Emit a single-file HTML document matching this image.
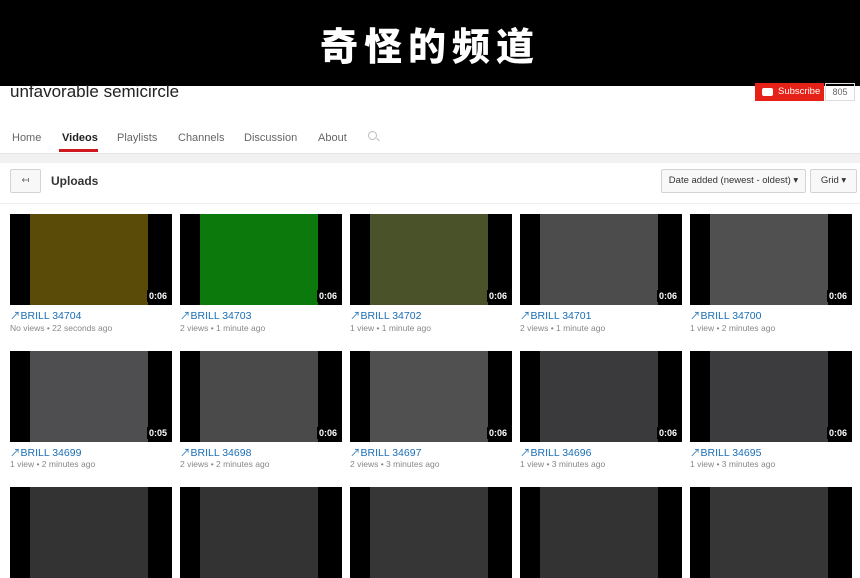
<!DOCTYPE html><html><head><meta charset="utf-8"><style>
body{margin:0;width:860px;height:567px;overflow:hidden;background:#fff;font-family:"Liberation Sans","Noto Sans CJK SC",sans-serif;position:relative}
.top{position:absolute;left:0;top:0;width:860px;height:86px;background:#000;color:#fff;font:900 38px "Noto Sans CJK SC",sans-serif;text-align:center;line-height:88px;letter-spacing:6px}
.a{position:absolute}
.name{left:10px;top:82px;font-size:17px;color:#222}
.sub{left:755px;top:83px;width:69px;height:18px;background:#e62117;color:#fff;font-size:9.5px;line-height:18px;overflow:hidden}
.sub i{position:absolute;left:7px;top:5px;width:11px;height:8px;background:#fff;border-radius:2px}
.sub span{position:absolute;left:23px}
.cnt{left:825px;top:83px;width:28px;height:16px;border:1px solid #ddd;font-size:9px;color:#666;line-height:16px;text-align:center}
.tab{top:132px;font-size:11px;color:#666}
.band{left:0;top:153px;width:860px;height:9px;background:#f1f1f1;border-top:1px solid #e4e4e4}
.btn{border:1px solid #d3d3d3;background:#f8f8f8;border-radius:2px;font-size:9.5px;color:#333;line-height:22px}
.thumb{position:absolute;width:162px;height:91px;background:#000;overflow:hidden}
.thumb b{position:absolute;left:20px;top:0;width:118px;height:91px}
.thumb em{position:absolute;right:3px;bottom:3px;background:#000;color:#fff;font:bold 9px "Liberation Sans";padding:1px 2px;font-style:normal}
.t{position:absolute;font-size:10.5px;color:#1a6eb5}
.m{position:absolute;font-size:8.5px;color:#888}
</style></head><body>
<div class="top">奇怪的频道</div>
<div class="a name">unfavorable semicircle</div>
<div class="a sub"><i></i><span>Subscribe</span></div>
<div class="a cnt">805</div>
<div class="a tab" style="left:12px">Home</div>
<div class="a tab" style="left:62px;color:#222;font-weight:bold">Videos</div>
<div class="a" style="left:59px;top:149px;width:39px;height:3px;background:#cc181e"></div>
<div class="a tab" style="left:117px">Playlists</div>
<div class="a tab" style="left:178px">Channels</div>
<div class="a tab" style="left:244px">Discussion</div>
<div class="a tab" style="left:318px">About</div>
<div class="a" style="left:368px;top:131px;width:7px;height:7px;border:1px solid #bbb;border-radius:50%"></div>
<div class="a" style="left:376px;top:139px;width:4px;height:1px;background:#bbb;transform:rotate(45deg)"></div>
<div class="a band"></div>
<div class="a btn" style="left:10px;top:169px;width:29px;height:22px;text-align:center;color:#666">↤</div>
<div class="a" style="left:51px;top:174px;font-size:12px;font-weight:bold;color:#333">Uploads</div>
<div class="a btn" style="left:661px;top:169px;width:143px;text-align:center">Date added (newest - oldest) ▾</div>
<div class="a btn" style="left:810px;top:169px;width:45px;text-align:center">Grid ▾</div>
<div class="a" style="left:0;top:203px;width:860px;height:1px;background:#eee"></div>

<div class="thumb" style="left:10px;top:214px"><b style="background:#5a4c08"></b><em>0:06</em></div>
<div class="thumb" style="left:180px;top:214px"><b style="background:#0b790c"></b><em>0:06</em></div>
<div class="thumb" style="left:350px;top:214px"><b style="background:#4a5229"></b><em>0:06</em></div>
<div class="thumb" style="left:520px;top:214px"><b style="background:#4c4c4c"></b><em>0:06</em></div>
<div class="thumb" style="left:690px;top:214px"><b style="background:#505050"></b><em>0:06</em></div>
<div class="thumb" style="left:10px;top:351px"><b style="background:#4e4e50"></b><em>0:05</em></div>
<div class="thumb" style="left:180px;top:351px"><b style="background:#4a4a4a"></b><em>0:06</em></div>
<div class="thumb" style="left:350px;top:351px"><b style="background:#505050"></b><em>0:06</em></div>
<div class="thumb" style="left:520px;top:351px"><b style="background:#3a3a3c"></b><em>0:06</em></div>
<div class="thumb" style="left:690px;top:351px"><b style="background:#3c3c3e"></b><em>0:06</em></div>
<div class="thumb" style="left:10px;top:487px"><b style="background:#333"></b></div>
<div class="thumb" style="left:180px;top:487px"><b style="background:#333"></b></div>
<div class="thumb" style="left:350px;top:487px"><b style="background:#363636"></b></div>
<div class="thumb" style="left:520px;top:487px"><b style="background:#333"></b></div>
<div class="thumb" style="left:690px;top:487px"><b style="background:#363636"></b></div>

<div class="t" style="left:10px;top:308px">↗BRILL 34704</div><div class="m" style="left:10px;top:323px">No views • 22 seconds ago</div>
<div class="t" style="left:180px;top:308px">↗BRILL 34703</div><div class="m" style="left:180px;top:323px">2 views • 1 minute ago</div>
<div class="t" style="left:350px;top:308px">↗BRILL 34702</div><div class="m" style="left:350px;top:323px">1 view • 1 minute ago</div>
<div class="t" style="left:520px;top:308px">↗BRILL 34701</div><div class="m" style="left:520px;top:323px">2 views • 1 minute ago</div>
<div class="t" style="left:690px;top:308px">↗BRILL 34700</div><div class="m" style="left:690px;top:323px">1 view • 2 minutes ago</div>
<div class="t" style="left:10px;top:445px">↗BRILL 34699</div><div class="m" style="left:10px;top:459px">1 view • 2 minutes ago</div>
<div class="t" style="left:180px;top:445px">↗BRILL 34698</div><div class="m" style="left:180px;top:459px">2 views • 2 minutes ago</div>
<div class="t" style="left:350px;top:445px">↗BRILL 34697</div><div class="m" style="left:350px;top:459px">2 views • 3 minutes ago</div>
<div class="t" style="left:520px;top:445px">↗BRILL 34696</div><div class="m" style="left:520px;top:459px">1 view • 3 minutes ago</div>
<div class="t" style="left:690px;top:445px">↗BRILL 34695</div><div class="m" style="left:690px;top:459px">1 view • 3 minutes ago</div>
</body></html>
